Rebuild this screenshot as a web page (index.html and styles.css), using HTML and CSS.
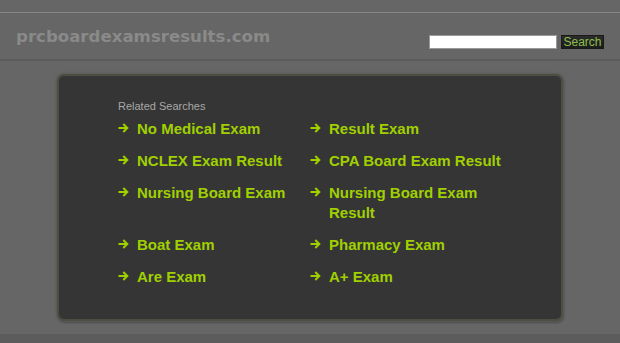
FILE: index.html
```html
<!DOCTYPE html>
<html lang="en">
<head>
<meta charset="utf-8">
<title>prcboardexamsresults.com</title>
<link rel="stylesheet" href="styles.css">
</head>
<body>
<div class="page">
  <div class="topbar"></div>
  <header class="header">
    <div class="logo">prcboardexamsresults.com</div>
    <form class="search">
      <input class="search-input" type="text">
      <button class="search-btn" type="button">Search</button>
    </form>
  </header>
  <main class="main">
    <section class="box">
      <div class="related">Related Searches</div>
      <ul class="links">
        <li class="item"><span class="arrow"><svg width="11" height="10" viewBox="0 0 11 10"><path d="M0.5 5H9.3M5.3 1L9.3 5L5.3 9" fill="none" stroke="#a0d000" stroke-width="2"/></svg></span><a href="#">No Medical Exam</a></li>
        <li class="item"><span class="arrow"><svg width="11" height="10" viewBox="0 0 11 10"><path d="M0.5 5H9.3M5.3 1L9.3 5L5.3 9" fill="none" stroke="#a0d000" stroke-width="2"/></svg></span><a href="#">Result Exam</a></li>
        <li class="item"><span class="arrow"><svg width="11" height="10" viewBox="0 0 11 10"><path d="M0.5 5H9.3M5.3 1L9.3 5L5.3 9" fill="none" stroke="#a0d000" stroke-width="2"/></svg></span><a href="#">NCLEX Exam Result</a></li>
        <li class="item"><span class="arrow"><svg width="11" height="10" viewBox="0 0 11 10"><path d="M0.5 5H9.3M5.3 1L9.3 5L5.3 9" fill="none" stroke="#a0d000" stroke-width="2"/></svg></span><a href="#">CPA Board Exam Result</a></li>
        <li class="item"><span class="arrow"><svg width="11" height="10" viewBox="0 0 11 10"><path d="M0.5 5H9.3M5.3 1L9.3 5L5.3 9" fill="none" stroke="#a0d000" stroke-width="2"/></svg></span><a href="#">Nursing Board Exam</a></li>
        <li class="item"><span class="arrow"><svg width="11" height="10" viewBox="0 0 11 10"><path d="M0.5 5H9.3M5.3 1L9.3 5L5.3 9" fill="none" stroke="#a0d000" stroke-width="2"/></svg></span><a href="#">Nursing Board Exam Result</a></li>
        <li class="item"><span class="arrow"><svg width="11" height="10" viewBox="0 0 11 10"><path d="M0.5 5H9.3M5.3 1L9.3 5L5.3 9" fill="none" stroke="#a0d000" stroke-width="2"/></svg></span><a href="#">Boat Exam</a></li>
        <li class="item"><span class="arrow"><svg width="11" height="10" viewBox="0 0 11 10"><path d="M0.5 5H9.3M5.3 1L9.3 5L5.3 9" fill="none" stroke="#a0d000" stroke-width="2"/></svg></span><a href="#">Pharmacy Exam</a></li>
        <li class="item"><span class="arrow"><svg width="11" height="10" viewBox="0 0 11 10"><path d="M0.5 5H9.3M5.3 1L9.3 5L5.3 9" fill="none" stroke="#a0d000" stroke-width="2"/></svg></span><a href="#">Are Exam</a></li>
        <li class="item"><span class="arrow"><svg width="11" height="10" viewBox="0 0 11 10"><path d="M0.5 5H9.3M5.3 1L9.3 5L5.3 9" fill="none" stroke="#a0d000" stroke-width="2"/></svg></span><a href="#">A+ Exam</a></li>
      </ul>
    </section>
  </main>
  <footer class="footer"></footer>
</div>
</body>
</html>
```
FILE: styles.css
```css
html, body {
  margin: 0;
  padding: 0;
  background: #666666;
  height: 100%;
  overflow: hidden;
}
.page {
  font-family: "Liberation Sans", Arial, sans-serif;
  display: flex;
  flex-direction: column;
  height: 343px;
}
.topbar {
  height: 12px;
  background: #666666;
}
.header {
  border-top: 1px solid #878787;
  border-bottom: 2px solid #5b5b5b;
  height: 46px;
  display: flex;
  justify-content: space-between;
  align-items: flex-start;
  box-sizing: content-box;
}
.logo {
  font-family: "DejaVu Sans", Verdana, sans-serif;
  font-weight: bold;
  font-size: 16.6px;
  color: #8a8a8a;
  margin: 14px 0 0 16px;
  line-height: 20px;
}
.search {
  display: flex;
  gap: 4px;
  margin: 22px 16px 0 0;
}
.search-input {
  width: 128px;
  height: 14px;
  box-sizing: border-box;
  border: 1px solid #9a9a9a;
  background: #ffffff;
  margin: 0;
  padding: 0;
}
.search-btn {
  width: 43px;
  height: 14px;
  box-sizing: border-box;
  border: 1px solid #1a1a1a;
  background: linear-gradient(#2c2c2c, #1c1c1c);
  color: #8cbf4a;
  font-family: "Liberation Sans", Arial, sans-serif;
  font-size: 12px;
  line-height: 12px;
  padding: 0;
  margin: 0;
}
.main {
  flex: 1;
  padding-top: 13px;
  display: flex;
  justify-content: center;
}
.box {
  width: 506px;
  height: 247px;
  box-sizing: border-box;
  background: #353535;
  border: 2px solid #4d4d42;
  border-radius: 7px;
  box-shadow: 0 0 2px 1px #5a5a5a, 1px 2px 2px rgba(0,0,0,0.25);
  padding: 24px 0 0 59px;
}
.related {
  font-size: 11px;
  line-height: 13px;
  color: #a8a8a8;
  margin-bottom: 6px;
}
.links {
  list-style: none;
  margin: 0;
  padding: 0;
  display: grid;
  grid-template-columns: 192px 192px;
  row-gap: 12px;
  align-items: start;
}
.item {
  display: flex;
  align-items: flex-start;
  font-size: 15px;
  line-height: 20px;
  font-weight: bold;
}
.arrow {
  flex: 0 0 19px;
  height: 20px;
  display: flex;
  align-items: center;
  padding-bottom: 2px;
  box-sizing: border-box;
}
.item a {
  color: #a0d000;
  text-decoration: none;
}
.footer {
  height: 9px;
  background: #5c5c5c;
}
```
